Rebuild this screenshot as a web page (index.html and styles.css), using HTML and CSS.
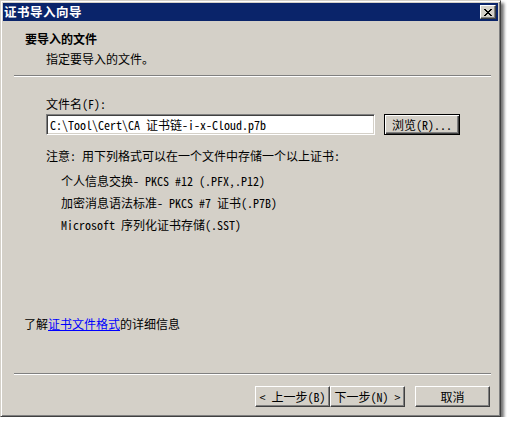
FILE: index.html
```html
<!DOCTYPE html>
<html lang="zh-CN">
<head>
<meta charset="utf-8">
<title>证书导入向导</title>
<link rel="stylesheet" href="styles.css">
</head>
<body>
<div class="window">
  <div class="titlebar">
    <span class="title">证书导入向导</span>
    <span class="close-btn">
      <svg width="8" height="7" viewBox="0 0 8 7"><path d="M0 0h2v1h1v1h2v-1h1v-1h2v1h-1v1h-1v1h-1v1h1v1h1v1h1v1h-2v-1h-1v-1h-2v1h-1v1h-2v-1h1v-1h1v-1h1v-1h-1v-1h-1v-1h-1z" fill="#000"/></svg>
    </span>
  </div>
  <div class="header">
    <div class="h-title">要导入的文件</div>
    <div class="h-sub">指定要导入的文件。</div>
  </div>
  <div class="sep"></div>
  <div class="content">
    <div class="label">文件名(F):</div>
    <div class="file-row">
      <div class="textbox">C:\Tool\Cert\CA 证书链-i-x-Cloud.p7b</div>
      <div class="btn btn-default">浏览(R)...</div>
    </div>
    <div class="note">注意: 用下列格式可以在一个文件中存储一个以上证书:</div>
    <div class="item">个人信息交换- PKCS #12 (.PFX,.P12)</div>
    <div class="item">加密消息语法标准- PKCS #7 证书(.P7B)</div>
    <div class="item">Microsoft 序列化证书存储(.SST)</div>
  </div>
  <div class="more">了解<a class="link" href="#">证书文件格式</a>的详细信息</div>
  <div class="sep"></div>
  <div class="buttons">
    <div class="btn btn-nav">&lt; 上一步(B)</div>
    <div class="btn btn-nav">下一步(N) &gt;</div>
    <div class="btn btn-cancel">取消</div>
  </div>
</div>
</body>
</html>
```

FILE: styles.css
```css
html, body {
  margin: 0;
  padding: 0;
  background: #ffffff;
}
body {
  font-family: "Noto Sans Mono CJK SC", "Noto Sans CJK SC", "Liberation Mono", monospace;
  font-size: 12px;
  line-height: 12px;
  color: #000;
}
.window {
  box-sizing: border-box;
  width: 501px;
  height: 417px;
  background: #d4d0c8;
  border: 1px solid;
  border-color: #d4d0c8 #404040 #404040 #d4d0c8;
  box-shadow: inset 1px 1px 0 #ffffff, inset -1px -1px 0 #808080, 3px 3px 3px rgba(0,0,0,0.55);
  padding: 2px;
  display: flex;
  flex-direction: column;
}
.titlebar {
  height: 18px;
  background: #0a246a;
  display: flex;
  align-items: center;
  justify-content: space-between;
  padding: 0 2px 0 1px;
}
.title {
  color: #fff;
  font-weight: bold;
  font-family: "Noto Sans CJK SC", sans-serif;
  font-size: 12.5px;
  letter-spacing: 0.5px;
  line-height: 18px;
}
.close-btn {
  box-sizing: border-box;
  width: 16px;
  height: 14px;
  background: #d4d0c8;
  border: 1px solid;
  border-color: #ffffff #404040 #404040 #ffffff;
  box-shadow: inset -1px -1px 0 #808080;
  display: flex;
  align-items: center;
  justify-content: center;
}
.header {
  padding: 12px 0 0 22px;
  height: 42px;
}
.h-title {
  font-weight: bold;
  font-family: "Noto Sans CJK SC", sans-serif;
}
.h-sub {
  margin-top: 8px;
  padding-left: 21px;
  font-family: "Noto Sans CJK SC", sans-serif;
}
.sep {
  border-top: 1px solid #808080;
  border-bottom: 1px solid #ffffff;
  height: 0;
  margin: 0 7px 0 11px;
}
.content {
  padding-left: 43px;
  height: 241px;
}
.label {
  margin-top: 21px;
}
.file-row {
  display: flex;
  margin-top: 4px;
  gap: 9px;
}
.textbox {
  box-sizing: border-box;
  width: 329px;
  height: 21px;
  background: #fff;
  border: 1px solid;
  border-color: #808080 #ffffff #ffffff #808080;
  box-shadow: inset 1px 1px 0 #404040, inset -1px -1px 0 #d4d0c8;
  padding: 3px 0 0 3px;
  line-height: 14px;
  white-space: nowrap;
}
.btn {
  box-sizing: border-box;
  height: 21px;
  background: #d4d0c8;
  border: 1px solid;
  border-color: #ffffff #404040 #404040 #ffffff;
  box-shadow: inset -1px -1px 0 #808080;
  display: flex;
  align-items: center;
  justify-content: center;
  white-space: nowrap;
}
.btn-default {
  width: 76px;
  border-color: #000;
  box-shadow: inset 1px 1px 0 #ffffff, inset -1px -1px 0 #404040, inset -2px -2px 0 #808080;
}
.note {
  margin-top: 15px;
}
.item {
  padding-left: 15px;
  margin-top: 13px;
}
.item + .item {
  margin-top: 10px;
}
.more {
  padding-left: 21px;
  height: 55px;
  font-family: "Noto Sans CJK SC", sans-serif;
}
.link {
  color: #0000ff;
  text-decoration: underline;
}
.buttons {
  display: flex;
  padding: 11px 0 0 252px;
}
.btn-nav {
  width: 75px;
}
.btn-cancel {
  width: 75px;
  margin-left: 10px;
}
```
